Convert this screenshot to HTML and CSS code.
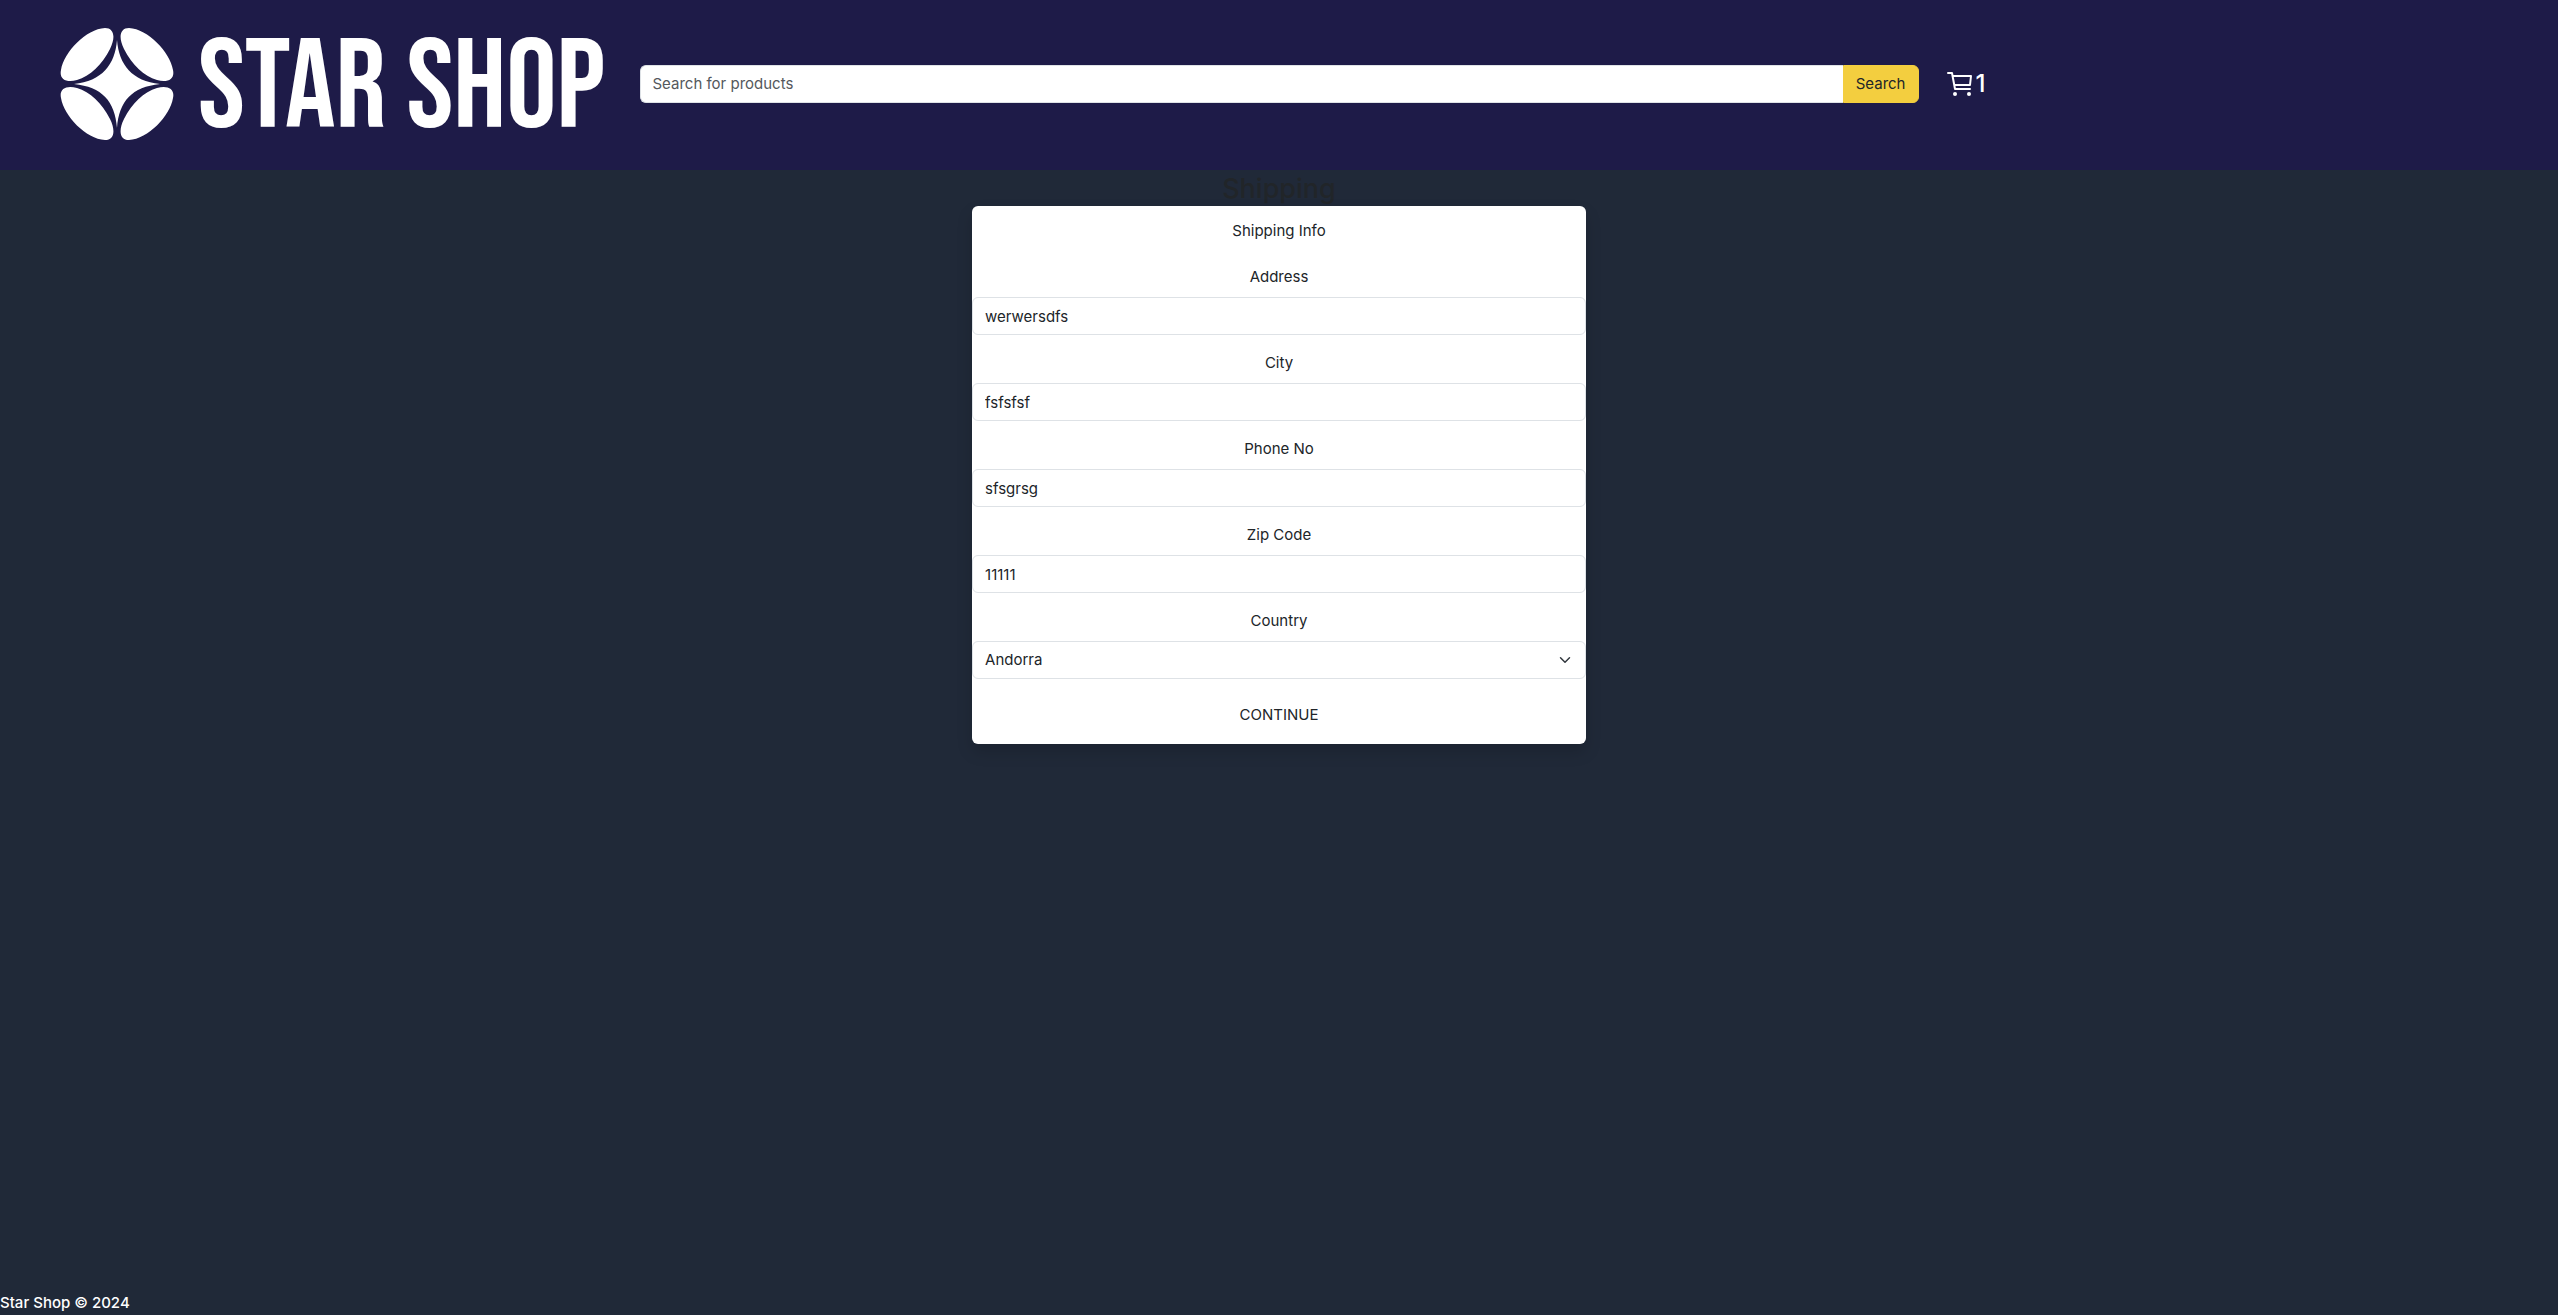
FILE: index.html
```html
<!DOCTYPE html>
<html lang="en">
<head>
<meta charset="utf-8">
<meta name="viewport" content="width=device-width, initial-scale=1">
<title>Star Shop</title>
<link rel="stylesheet" href="styles.css">
</head>
<body>
<header class="navbar">
  <a class="brand" href="#">
    <svg class="brand-mark" viewBox="0 0 114 114" aria-hidden="true">
      <g fill="#fff">
        <path id="petal" d="M45 1C54 1 56 10 50 22C42 38 30 49 17 53C6 56 -1 52 1 43C4 25 26 2 45 1Z"/>
        <use href="#petal" transform="translate(114 0) scale(-1 1)"/>
        <use href="#petal" transform="translate(0 114) scale(1 -1)"/>
        <use href="#petal" transform="translate(114 114) scale(-1 -1)"/>
        <path d="M57 13C59 38 72 54 100 57C72 60 59 74 57 101C55 74 42 60 14 57C42 54 55 38 57 13Z"/>
      </g>
    </svg>
    <span class="brand-name">STAR SHOP</span>
  </a>
  <form class="search" role="search">
    <input class="search-input" type="text" placeholder="Search for products" aria-label="Search for products">
    <button class="search-button" type="button">Search</button>
  </form>
  <a class="cart" href="#" aria-label="Cart, 1 item">
    <svg class="cart-icon" viewBox="0 0 26 26" fill="none" stroke="#fff" stroke-width="2" stroke-linejoin="round" stroke-linecap="round" aria-hidden="true">
      <path d="M1 2H5L8 18H23M6 5H24L23 14H8"/>
      <g fill="#fff" stroke="none"><circle cx="8" cy="23" r="2"/><circle cx="22" cy="23" r="2"/></g>
    </svg>
    <span>1</span>
  </a>
</header>
<main class="page">
  <h1 class="title">Shipping</h1>
  <form class="card">
    <h2 class="card-title">Shipping Info</h2>
    <div class="field">
      <label for="address">Address</label>
      <input class="control" id="address" type="text" value="werwersdfs">
    </div>
    <div class="field">
      <label for="city">City</label>
      <input class="control" id="city" type="text" value="fsfsfsf">
    </div>
    <div class="field">
      <label for="phone">Phone No</label>
      <input class="control" id="phone" type="tel" value="sfsgrsg">
    </div>
    <div class="field">
      <label for="zip">Zip Code</label>
      <input class="control" id="zip" type="text" value="11111">
    </div>
    <div class="field">
      <label for="country">Country</label>
      <select class="control select" id="country">
        <option>Andorra</option>
      </select>
    </div>
    <button class="continue" type="button">CONTINUE</button>
  </form>
</main>
<footer class="footer">Star Shop © 2024</footer>
</body>
</html>
```
FILE: styles.css
```css
*, *::before, *::after { box-sizing: border-box; }

body {
  margin: 0;
  min-height: 100vh;
  display: flex;
  flex-direction: column;
  background: #202938;
  color: #212529;
  font-family: Inter, "Liberation Sans", sans-serif;
  font-size: 15px;
  line-height: 24px;
}

input, select, button { font: inherit; color: inherit; margin: 0; }

.navbar {
  display: grid;
  grid-template-columns: minmax(0, 1fr) minmax(0, 2fr) minmax(0, 1fr);
  align-items: center;
  min-height: 170px;
  padding-bottom: 3px;
  background: #1e1b48;
}

.brand {
  display: flex;
  align-items: center;
  gap: 24px;
  padding-left: 60px;
  color: #fff;
  text-decoration: none;
}

.brand-mark { width: 114px; height: 114px; flex: none; }

.brand-name {
  padding-top: 12px;
  font-family: "Bebas Neue", "Roboto Condensed", "Liberation Sans Narrow", sans-serif;
  font-size: 126px;
  font-weight: 400;
  line-height: 96px;
  white-space: nowrap;
}

.search { display: flex; }

.search-input {
  flex: 1;
  min-width: 0;
  height: 38px;
  padding: 6px 12px;
  border: 1px solid #dee2e6;
  border-right: 0;
  border-radius: 6px 0 0 6px;
  background: #fff;
}

.search-input::placeholder { color: #54585c; opacity: 1; }

.search-button {
  height: 38px;
  padding: 6px 12px;
  border: 1px solid #f3ce3f;
  border-radius: 0 6px 6px 0;
  background: #f3ce3f;
}

.cart {
  display: flex;
  align-items: center;
  gap: 3px;
  padding-left: 28px;
  color: #fff;
  font-size: 24px;
  font-weight: 500;
  text-decoration: none;
}

.cart-icon { width: 26px; height: 26px; }

.page {
  flex: 1;
  display: flex;
  flex-direction: column;
  align-items: center;
}

.title {
  margin: 2px 0 0;
  font-size: 27px;
  font-weight: 500;
  line-height: 34px;
}

.card {
  width: 24%;
  min-width: 320px;
  padding: 13px 0 9px;
  border-radius: 6px;
  background: #fff;
  box-shadow: 0 8px 16px rgba(0, 0, 0, 0.15);
  text-align: center;
}

.card-title {
  margin: 0 0 22px;
  font-size: 15px;
  font-weight: 400;
  line-height: 24px;
}

.field {
  display: flex;
  flex-direction: column;
  gap: 8px;
  margin-bottom: 16px;
}

.control {
  width: 100%;
  height: 38px;
  padding: 6px 12px;
  border: 1px solid #dee2e6;
  border-radius: 6px;
  background: #fff;
}

.select {
  appearance: none;
  padding-right: 36px;
  background: #fff url("data:image/svg+xml,%3csvg xmlns='http://www.w3.org/2000/svg' viewBox='0 0 16 16'%3e%3cpath fill='none' stroke='%23343a40' stroke-linecap='round' stroke-linejoin='round' stroke-width='2' d='m2 5 6 6 6-6'/%3e%3c/svg%3e") no-repeat right 12px center / 16px 12px;
}

.continue {
  width: 100%;
  height: 40px;
  padding: 0;
  border: 0;
  background: none;
}

.footer {
  color: #fff;
  font-weight: 500;
}
```
